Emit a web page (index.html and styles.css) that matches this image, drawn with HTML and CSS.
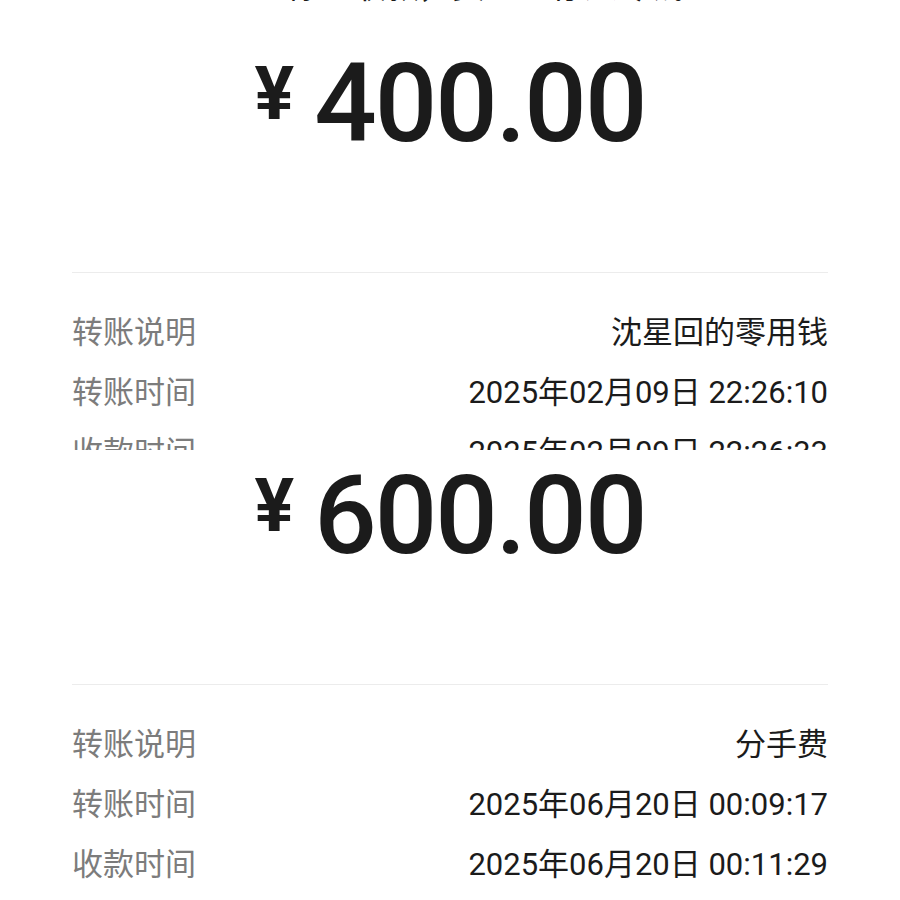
FILE: index.html
```html
<!DOCTYPE html>
<html lang="zh-CN">
<head>
    <meta charset="UTF-8">
    <meta name="viewport" content="width=device-width, initial-scale=1.0">
    <link rel="stylesheet" href="styles.css">
</head>
<body>

<!-- primera captura -->
<div class="shot">
    <div class="receipt first">
        <div class="status">你已收款，资金已存入零钱</div>
        <div class="amount">
            <span class="currency">¥</span>
            <span class="value">400.00</span>
        </div>
        <div class="divider"></div>
        <div class="rows">
            <div class="row"><span class="label">转账说明</span><span class="text">沈星回的零用钱</span></div>
            <div class="row"><span class="label">转账时间</span><span class="text">2025年02月09日 22:26:10</span></div>
            <div class="row"><span class="label">收款时间</span><span class="text">2025年02月09日 22:26:33</span></div>
        </div>
    </div>
</div>

<!-- segunda captura -->
<div class="shot">
    <div class="receipt second">
        <div class="status">你已收款，资金已存入零钱</div>
        <div class="amount">
            <span class="currency">¥</span>
            <span class="value">600.00</span>
        </div>
        <div class="divider"></div>
        <div class="rows">
            <div class="row"><span class="label">转账说明</span><span class="text">分手费</span></div>
            <div class="row"><span class="label">转账时间</span><span class="text">2025年06月20日 00:09:17</span></div>
            <div class="row"><span class="label">收款时间</span><span class="text">2025年06月20日 00:11:29</span></div>
        </div>
    </div>
</div>

</body>
</html>
```

FILE: styles.css
```css
body {
    margin: 0;
    background: #ffffff;
    font-family: Roboto, "Noto Sans CJK SC", sans-serif;
    color: #1b1b1b;
}

.shot {
    height: 450px;
    overflow: hidden;
}

.receipt {
    padding: 0 72px;
}

.receipt.first {
    margin-top: -33px;
}

.receipt.second {
    margin-top: -71px;
}

.status {
    height: 40px;
    line-height: 40px;
    font-size: 33px;
    text-align: center;
    padding-left: 70px;
    color: #1b1b1b;
}

.amount {
    margin-top: 37px;
    height: 120px;
    display: flex;
    justify-content: center;
    align-items: flex-start;
}

.currency {
    font-size: 74px;
    line-height: 74px;
    font-weight: 700;
    margin-top: 13px;
    margin-right: 20px;
}

.value {
    font-size: 110px;
    line-height: 120px;
    font-weight: 500;
    letter-spacing: -2px;
}

.divider {
    margin-top: 108px;
    height: 1px;
    background: #ececec;
}

.rows {
    padding-top: 26px;
}

.row {
    height: 60px;
    display: flex;
    justify-content: space-between;
    align-items: center;
    font-size: 31px;
}

.label {
    color: #7c7c7c;
}

.text {
    color: #1b1b1b;
}
```
